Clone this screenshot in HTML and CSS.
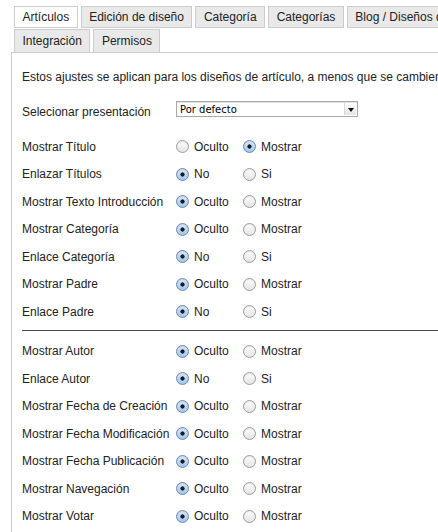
FILE: index.html
```html
<!DOCTYPE html>
<html lang="es">
<head>
  <meta charset="UTF-8" />
  <meta name="viewport" content="width=device-width, initial-scale=1.0"/>
  <title>Opciones de artículos</title>
  <link rel="stylesheet" href="styles.css">
</head>
<body>
  <div class="page">
    <div class="tabs">
      <div class="tab-row">
        <div class="tab active">Artículos</div>
        <div class="tab">Edición de diseño</div>
        <div class="tab">Categoría</div>
        <div class="tab">Categorías</div>
        <div class="tab">Blog / Diseños de lista</div>
      </div>
      <div class="tab-row">
        <div class="tab">Integración</div>
        <div class="tab">Permisos</div>
      </div>
    </div>

    <div class="panel">
      <p class="intro">Estos ajustes se aplican para los diseños de artículo, a menos que se cambien para un elemento de menú específico.</p>

      <div class="select-row">
        <label class="field-label" for="layout">Selecionar presentación</label>
        <div class="select-box">
          <select id="layout">
            <option>Por defecto</option>
          </select>
          <span class="select-arrow"></span>
        </div>
      </div>

      <div class="options">
        <div class="opt-row">
          <span class="field-label">Mostrar Título</span>
          <label class="choice"><input type="radio" name="show_title"> Oculto</label>
          <label class="choice"><input type="radio" name="show_title" checked> Mostrar</label>
        </div>
        <div class="opt-row">
          <span class="field-label">Enlazar Títulos</span>
          <label class="choice"><input type="radio" name="link_titles" checked> No</label>
          <label class="choice"><input type="radio" name="link_titles"> Si</label>
        </div>
        <div class="opt-row">
          <span class="field-label">Mostrar Texto Introducción</span>
          <label class="choice"><input type="radio" name="show_intro" checked> Oculto</label>
          <label class="choice"><input type="radio" name="show_intro"> Mostrar</label>
        </div>
        <div class="opt-row">
          <span class="field-label">Mostrar Categoría</span>
          <label class="choice"><input type="radio" name="show_category" checked> Oculto</label>
          <label class="choice"><input type="radio" name="show_category"> Mostrar</label>
        </div>
        <div class="opt-row">
          <span class="field-label">Enlace Categoría</span>
          <label class="choice"><input type="radio" name="link_category" checked> No</label>
          <label class="choice"><input type="radio" name="link_category"> Si</label>
        </div>
        <div class="opt-row">
          <span class="field-label">Mostrar Padre</span>
          <label class="choice"><input type="radio" name="show_parent" checked> Oculto</label>
          <label class="choice"><input type="radio" name="show_parent"> Mostrar</label>
        </div>
        <div class="opt-row">
          <span class="field-label">Enlace Padre</span>
          <label class="choice"><input type="radio" name="link_parent" checked> No</label>
          <label class="choice"><input type="radio" name="link_parent"> Si</label>
        </div>
      </div>

      <hr class="separator">

      <div class="options">
        <div class="opt-row">
          <span class="field-label">Mostrar Autor</span>
          <label class="choice"><input type="radio" name="show_author" checked> Oculto</label>
          <label class="choice"><input type="radio" name="show_author"> Mostrar</label>
        </div>
        <div class="opt-row">
          <span class="field-label">Enlace Autor</span>
          <label class="choice"><input type="radio" name="link_author" checked> No</label>
          <label class="choice"><input type="radio" name="link_author"> Si</label>
        </div>
        <div class="opt-row">
          <span class="field-label">Mostrar Fecha de Creación</span>
          <label class="choice"><input type="radio" name="show_create" checked> Oculto</label>
          <label class="choice"><input type="radio" name="show_create"> Mostrar</label>
        </div>
        <div class="opt-row">
          <span class="field-label">Mostrar Fecha Modificación</span>
          <label class="choice"><input type="radio" name="show_modify" checked> Oculto</label>
          <label class="choice"><input type="radio" name="show_modify"> Mostrar</label>
        </div>
        <div class="opt-row">
          <span class="field-label">Mostrar Fecha Publicación</span>
          <label class="choice"><input type="radio" name="show_publish" checked> Oculto</label>
          <label class="choice"><input type="radio" name="show_publish"> Mostrar</label>
        </div>
        <div class="opt-row">
          <span class="field-label">Mostrar Navegación</span>
          <label class="choice"><input type="radio" name="show_nav" checked> Oculto</label>
          <label class="choice"><input type="radio" name="show_nav"> Mostrar</label>
        </div>
        <div class="opt-row">
          <span class="field-label">Mostrar Votar</span>
          <label class="choice"><input type="radio" name="show_vote" checked> Oculto</label>
          <label class="choice"><input type="radio" name="show_vote"> Mostrar</label>
        </div>
      </div>
    </div>
  </div>
</body>
</html>
```

FILE: styles.css
```css
html {
  overflow: hidden;
}

body {
  margin: 0;
  background-color: #fff;
  font-family: "Liberation Sans", Arial, sans-serif;
  font-size: 12px;
  color: #222;
}

.page {
  width: 700px;
  padding-top: 6px;
}

.tabs {
  padding-left: 14px;
}

.tab-row {
  display: flex;
  gap: 3px;
  margin-bottom: 1px;
}

.tab-row:last-child {
  margin-bottom: 0;
}

.tab {
  height: 20px;
  line-height: 20px;
  padding: 0 7.5px;
  border: 1px solid #ccc;
  background-color: #e9e9e9;
  white-space: nowrap;
}

.tab.active {
  background-color: #fff;
}

.tab-row:last-child .tab {
  height: 22px;
  line-height: 22px;
  border-bottom: none;
}

.panel {
  margin-left: 11px;
  border-top: 1px solid #ccc;
  border-left: 1px solid #ccc;
  padding: 17px 10px 20px 10px;
  min-height: 600px;
}

.intro {
  margin: 0 0 17px 0;
  line-height: 14px;
  white-space: nowrap;
}

.select-row {
  display: flex;
  align-items: flex-start;
  height: 18px;
}

.field-label {
  width: 154px;
  flex-shrink: 0;
  line-height: 14px;
}

.select-row .field-label {
  margin-top: 4px;
}

.select-box {
  position: relative;
  width: 182px;
  height: 16px;
}

.select-box select {
  appearance: none;
  -webkit-appearance: none;
  width: 182px;
  height: 16px;
  margin: 0;
  padding: 0 0 0 3px;
  border: 1px solid #a8a8a8;
  border-radius: 0;
  background: #fff;
  box-shadow: inset 0 1px 1px rgba(0,0,0,0.12);
  font-family: "DejaVu Sans", sans-serif;
  font-size: 10px;
  color: #000;
}

.select-arrow {
  position: absolute;
  top: 2px;
  right: 2px;
  width: 11px;
  height: 12px;
  border-left: 1px solid #d8d8d8;
  background: linear-gradient(#fbfbfb, #e4e4e4);
}

.select-arrow::after {
  content: "";
  position: absolute;
  left: 3px;
  top: 5px;
  border-left: 3px solid transparent;
  border-right: 3px solid transparent;
  border-top: 4px solid #111;
}

.options {
  display: flex;
  flex-direction: column;
}

.select-row + .options {
  margin-top: 14px;
}

.opt-row {
  display: flex;
  align-items: center;
  height: 27.5px;
}

.choice {
  display: flex;
  align-items: center;
  width: 67px;
  flex-shrink: 0;
  white-space: nowrap;
}

.choice input {
  appearance: none;
  -webkit-appearance: none;
  width: 13px;
  height: 13px;
  margin: 0 5px 0 0;
  border: 1px solid #9c9c9c;
  border-radius: 50%;
  background: linear-gradient(#fdfdfd, #e4e4e4);
  box-shadow: inset 0 1px 1px rgba(0,0,0,0.08);
  flex-shrink: 0;
}

.choice input:checked {
  border-color: #6f87ab;
  background:
    radial-gradient(circle, #1b1b1b 0 1.8px, transparent 2.4px),
    linear-gradient(#d9e9fb, #9ec6ee);
}

.separator {
  margin: 4px 0 7px 0;
  border: none;
  border-top: 1px solid #4a4a4a;
  height: 0;
}
```
